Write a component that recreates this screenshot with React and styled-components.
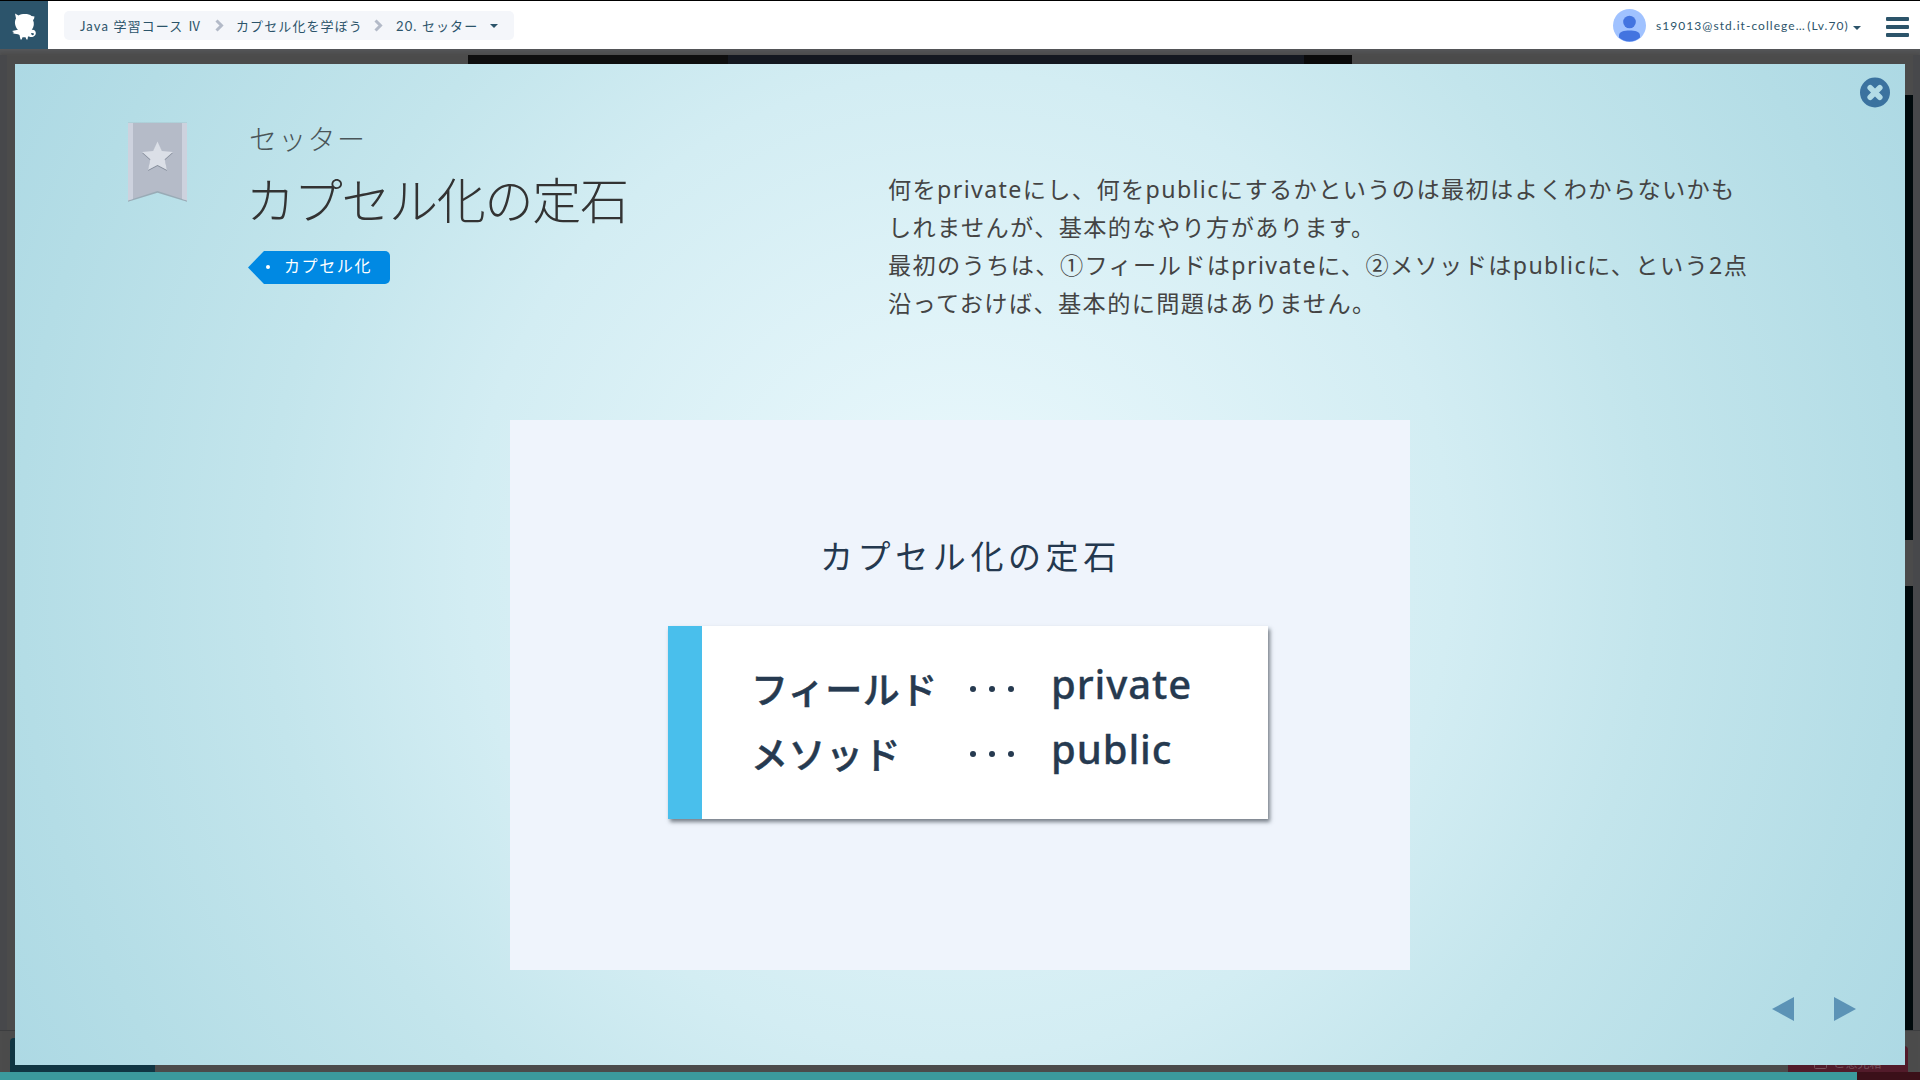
import React from "react";
import styled, { createGlobalStyle } from "styled-components";

const JP = `"Noto Sans CJK JP", sans-serif`;

const GlobalStyle = createGlobalStyle`
  * { box-sizing: border-box; }
  body { margin: 0; background: #4b4b4b; overflow: hidden; }
  p, h1, h2 { margin: 0; font-weight: inherit; }
  svg { display: block; flex: none; }
`;

const Page = styled.div`
  position: relative;
  display: flex;
  flex-direction: column;
  width: 1920px;
  height: 1080px;
  overflow: hidden;
  font-family: "Noto Sans", ${JP};
`;

const Header = styled.header`
  display: flex;
  align-items: center;
  height: 49px;
  flex: none;
  background: #fff;
  border-top: 1px solid #000;
  color: #2c546a;
`;

const Logo = styled.div`
  width: 48px;
  height: 48px;
  background: #2c546b;
`;

const Breadcrumb = styled.nav`
  display: flex;
  align-items: center;
  width: 450px;
  height: 29px;
  margin: 1px 0 0 16px;
  padding-left: 16px;
  border-radius: 5px;
  background: #f4f6fa;
  font: 400 13px/29px Lato, ${JP};
  letter-spacing: 1.1px;
  white-space: nowrap;
`;

const Crumb = styled.span`
  width: ${(p) => p.$w}px;
  padding-top: 1px;
`;

const Chevron = styled.svg`
  margin-right: ${(p) => p.$gap}px;
`;

const Account = styled.div`
  display: flex;
  align-items: center;
  margin-left: auto;
  padding-right: 11px;
  font: 400 12px/20px Lato, sans-serif;
  letter-spacing: 1.05px;
`;

const AccountName = styled.span`
  width: 192px;
  margin: 1px 5px 0 10px;
  word-spacing: -2.5px;
  white-space: nowrap;
`;

const Caret = styled.i`
  margin-top: ${(p) => p.$drop || 0}px;
  border: 4px solid transparent;
  border-top-color: currentColor;
  border-bottom: 0;
`;

const Burger = styled.div`
  display: grid;
  gap: 4px;
  width: 23px;
  margin: 3px 0 0 25px;
`;

const Bar = styled.i`
  height: 4px;
  border-radius: 1px;
  background: #2c546a;
`;

const Workspace = styled.div`
  position: relative;
  flex: 1;
  background: #4b4b4b;
  box-shadow: inset 0 5px 5px -2px #56585b;
`;

const Block = styled.div`
  position: absolute;
  left: ${(p) => p.$x}px;
  top: ${(p) => p.$y - 49}px;
  width: ${(p) => p.$w}px;
  height: ${(p) => p.$h}px;
  background: ${(p) => p.$c};
  border-radius: ${(p) => p.$r || 0};
`;

const Feedback = styled(Block)`
  display: flex;
  justify-content: center;
  align-items: center;
  gap: 6px;
  padding-bottom: 1px;
  color: #76515b;
  font: 400 12px/20px ${JP};
`;

const Modal = styled.main`
  position: absolute;
  left: 15px;
  top: 64px;
  display: flex;
  flex-direction: column;
  width: 1890px;
  height: 1001px;
  background: radial-gradient(circle at center, #ecf9fd 0%, #d3edf3 46%, #c3e5ec 65%, #b4dde6 88%, #add9e4 100%);
`;

const CloseButton = styled.button`
  position: absolute;
  top: 13px;
  right: 15px;
  padding: 0;
  border: 0;
  background: none;
`;

const Intro = styled.section`
  display: flex;
  height: 355.5px;
  padding: 57px 0 0 112px;
`;

const Heading = styled.div`
  width: 638px;
  margin-left: 61px;
  color: #333;
  white-space: nowrap;
`;

const Subtitle = styled.p`
  margin-top: -2px;
  margin-left: -1px;
  color: #4a5558;
  font: 200 28px/38px ${JP};
  letter-spacing: 1.3px;
`;

const Title = styled.h1`
  margin-top: 7px;
  margin-left: -4px;
  font: 200 49px/68px ${JP};
  letter-spacing: -1.3px;
`;

const Tag = styled.div`
  display: flex;
  align-items: center;
  width: 142px;
  height: 33px;
  margin-top: 19px;
  margin-left: -2px;
  padding: 0 0 3px 18px;
  background: #0089e3;
  border-radius: 0 5px 5px 0;
  clip-path: polygon(0 50%, 16px 0, 100% 0, 100% 100%, 16px 100%);
  color: #fff;
  font: 400 16px/28px ${JP};
  letter-spacing: 1.6px;
`;

const TagLabel = styled.span`
  margin-top: -2px;
`;

const Hole = styled.i`
  width: 4px;
  height: 4px;
  margin: 2px 14px 0 0;
  border-radius: 50%;
  background: #fff;
`;

const Description = styled.div`
  padding-top: 49px;
  color: #444;
  font: 400 23.2px/38px "Noto Sans", ${JP};
  letter-spacing: 1.37px;
  white-space: nowrap;
`;

const Slide = styled.section`
  display: flex;
  flex-direction: column;
  width: 900px;
  height: 550px;
  margin-left: 495px;
  padding: 110px 0 0 158px;
  background: #eff4fc;
  color: #24384f;
`;

const SlideTitle = styled.h2`
  height: 96px;
  padding-left: 152px;
  font: 400 33px/50px ${JP};
  letter-spacing: 4.6px;
`;

const RuleCard = styled.div`
  width: 600px;
  height: 193px;
  padding: 26px 0 0 49px;
  border-left: 34px solid #49bfec;
  background: #fff;
  box-shadow: 2px 3px 4px rgba(40, 50, 60, 0.6);
`;

const Rule = styled.div`
  display: grid;
  grid-template-columns: 215px 85px 1fr;
  height: 65px;
  color: #263a50;
`;

const Term = styled.span`
  padding-top: 10px;
  font: 500 37px/52px ${JP};
  -webkit-text-stroke: 0.5px #263a50;
  letter-spacing: 0.5px;
  white-space: nowrap;
`;

const Dots = styled.span`
  display: flex;
  gap: 13px;
  padding: 34px 0 0 4px;
`;

const Dot = styled.i`
  width: 6px;
  height: 6px;
  border-radius: 50%;
  background: currentColor;
`;

const Keyword = styled.span`
  font: 500 40px/64px "Noto Sans", sans-serif;
  -webkit-text-stroke: 0.3px #263a50;
  letter-spacing: 0.9px;
`;

const Pager = styled.nav`
  display: flex;
  gap: 40px;
  margin: 27.5px 49px 0 auto;
`;

const Progress = styled.div`
  position: absolute;
  left: 0;
  bottom: 0;
  width: 1857px;
  height: 8px;
  background: #3b9a9d;
`;

const description = [
  "何をprivateにし、何をpublicにするかというのは最初はよくわからないかも",
  "しれませんが、基本的なやり方があります。",
  "最初のうちは、①フィールドはprivateに、②メソッドはpublicに、という2点",
  "沿っておけば、基本的に問題はありません。",
];

const rules = [
  ["フィールド", "private"],
  ["メソッド", "public"],
];

function Separator({ gap }) {
  return (
    <Chevron $gap={gap} width="9" height="13" viewBox="0 0 9 13">
      <path d="M1.5 1.5 L6.5 6.5 L1.5 11.5" fill="none" stroke="#b3bac8" strokeWidth="3" />
    </Chevron>
  );
}

function Mascot() {
  return (
    <svg width="48" height="48" viewBox="0 0 48 48">
      <path
        fill="#fff"
        d="M15 12.500L18.500 14.500C22 12.500 29 12.500 31.500 15L34.500 15.500L34 18L33 19C34.500 22.500 34 25.500 32 28.500C30.500 31 31 34 32.500 34.200C34 34.200 34.500 32.500 33 32C31.500 32.500 30 31.500 30.800 29.800C32 28 35.600 28.800 35.800 31.700C36 35 32.500 37 29 35.500L28 35.500L27.500 38.500L26.500 38.500L25.500 36.200H22.500L21.700 38.500H20.500L19.500 34C17.500 32.500 15.500 33.500 12.500 32L14 31.200L12 30L18 28.800C15 26 14 20.500 16 17.500Z"
      />
    </svg>
  );
}

function Ribbon() {
  return (
    <svg width="62" height="84" viewBox="0 0 62 84">
      <path d="M1 1H60V80L30.500 71L1 80Z" fill="#8f9aa6" opacity=".75" transform="translate(0 .8)" />
      <path d="M1 2H60V79.500L30.500 70L1 79.500Z" fill="#b5bbc8" />
      <path d="M1 2H6V78L1 79.500ZM55 2H60V79.500L55 78Z" fill="#cdd2de" />
      <path d="M30.500 21.500l4.400 9.500 11 1-8.200 7.300 2.300 10.700-9.500-5-9.500 5 2.300-10.700-8.200-7.300 11-1z" fill="#858d9b" />
      <path d="M30.500 20.500l4.400 9.500 11 1-8.200 7.300 2.300 10.700-9.500-5-9.500 5 2.300-10.700-8.200-7.300 11-1z" fill="#dbdfe7" />
    </svg>
  );
}

export default function App() {
  return (
    <Page>
      <GlobalStyle />
      <Header>
        <Logo><Mascot /></Logo>
        <Breadcrumb>
          <Crumb $w={135}>Java 学習コース Ⅳ</Crumb>
          <Separator gap={12} />
          <Crumb $w={138}>カプセル化を学ぼう</Crumb>
          <Separator gap={13} />
          <Crumb $w={94}>20. セッター</Crumb>
          <Caret $drop={1} />
        </Breadcrumb>
        <Account>
          <svg width="33" height="33" viewBox="0 0 33 33">
            <circle cx="16.500" cy="16.500" r="16.500" fill="#a0c2ff" />
            <circle cx="16.500" cy="13" r="6.300" fill="#4374e0" />
            <path d="M6 28.500v-2c0-4 5-5 10.500-5s10.500 1 10.500 5v2a16 16 0 0 1-21 0z" fill="#4374e0" />
          </svg>
          <AccountName>s19013@std.it-college… (Lv.70)</AccountName>
          <Caret $drop={6} />
          <Burger><Bar /><Bar /><Bar /></Burger>
        </Account>
      </Header>

      <Workspace>
        <Block $x={0} $y={55} $w={7} $h={975} $c="#47484b" />
        <Block $x={468} $y={55} $w={260} $h={40} $c="#0e0e0e" />
        <Block $x={728} $y={55} $w={576} $h={40} $c="#141820" />
        <Block $x={1304} $y={55} $w={48} $h={40} $c="#0a0a0a" />
        <Block $x={1900} $y={95} $w={13} $h={445} $c="#00090c" />
        <Block $x={1900} $y={586} $w={13} $h={444} $c="#00090c" />
        <Block $x={1913} $y={55} $w={7} $h={975} $c="#47484b" />
        <Block $x={0} $y={1030} $w={1920} $h={1} $c="#3c3d3f" />
        <Block $x={10} $y={1038} $w={145} $h={42} $c="#103643" $r="4px 0 0 0" />
        <Feedback $x={1788} $y={1046} $w={120} $h={34} $c="#521b2a" $r="0 4px 0 0">
          <svg width="13" height="13" viewBox="0 0 13 13" fill="none" stroke="currentColor">
            <rect x=".5" y=".5" width="12" height="12" rx="1" />
            <path d="M3 5q3.500 6 7 0" />
          </svg>
          ご意見箱
        </Feedback>
        <Block $x={1857} $y={1072} $w={63} $h={8} $c="#3b1019" />
      </Workspace>

      <Modal>
        <CloseButton aria-label="close">
          <svg width="30" height="31" viewBox="0 0 30 31">
            <circle cx="15" cy="15.500" r="15" fill="#3b729f" />
            <path d="M10.200 10.700L19.800 20.300M19.800 10.700L10.200 20.300" stroke="#b2dbe6" strokeWidth="5.600" strokeLinecap="round" />
          </svg>
        </CloseButton>
        <Intro>
          <Ribbon />
          <Heading>
            <Subtitle>セッター</Subtitle>
            <Title>カプセル化の定石</Title>
            <Tag><Hole /><TagLabel>カプセル化</TagLabel></Tag>
          </Heading>
          <Description>
            {description.map((line) => <p key={line}>{line}</p>)}
          </Description>
        </Intro>
        <Slide>
          <SlideTitle>カプセル化の定石</SlideTitle>
          <RuleCard>
            {rules.map(([term, keyword]) => (
              <Rule key={term}>
                <Term>{term}</Term>
                <Dots><Dot /><Dot /><Dot /></Dots>
                <Keyword>{keyword}</Keyword>
              </Rule>
            ))}
          </RuleCard>
        </Slide>
        <Pager>
          <svg width="22" height="24" viewBox="0 0 22 24"><path d="M22 0V24L0 12Z" fill="#5c93b6" /></svg>
          <svg width="22" height="24" viewBox="0 0 22 24"><path d="M0 0V24L22 12Z" fill="#5c93b6" /></svg>
        </Pager>
      </Modal>
      <Progress />
    </Page>
  );
}
